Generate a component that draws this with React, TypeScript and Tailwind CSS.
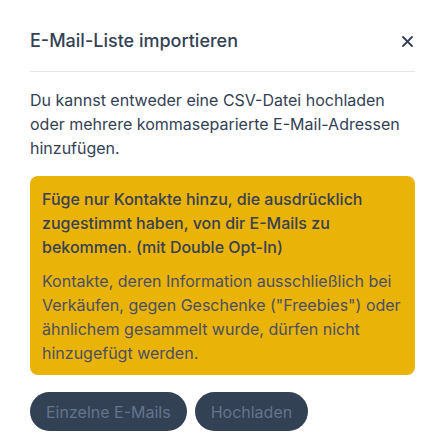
export default function App() {
  return (
    <div
      className="w-[445px] h-[446px] bg-white px-[30px] text-[#334155]"
      style={{ fontFamily: "Inter, 'Noto Sans', sans-serif" }}
    >
      <div className="flex items-center justify-between pt-[27px] pb-[16px] border-b border-[#e5e7eb]">
        <h2 className="text-[18px] leading-[28px] font-medium text-[#334155]">
          E-Mail-Liste importieren
        </h2>
        <button className="mr-[2px] text-[#334155]" aria-label="Schließen">
          <svg width="11" height="11" viewBox="0 0 11 11" fill="none">
            <path d="M1 1L10 10M10 1L1 10" stroke="currentColor" strokeWidth="1.8" strokeLinecap="round" />
          </svg>
        </button>
      </div>

      <p className="pt-[16px] text-[16px] leading-[24px] text-[#334155]">
        Du kannst entweder eine CSV-Datei hochladen oder mehrere kommaseparierte E-Mail-Adressen hinzufügen.
      </p>

      <div className="mt-[16px] rounded-lg bg-[#e9b308] px-3 pt-[11px] pb-[10px] flex flex-col gap-[10px]">
        <p className="text-[16px] leading-[24px] font-medium text-[#374151]">
          Füge nur Kontakte hinzu, die ausdrücklich zugestimmt haben, von dir E-Mails zu bekommen. (mit Double Opt-In)
        </p>
        <p className="text-[16px] leading-[24px] text-[#4b5060]">
          Kontakte, deren Information ausschließlich bei Verkäufen, gegen Geschenke ("Freebies") oder ähnlichem gesammelt wurde, dürfen nicht hinzugefügt werden.
        </p>
      </div>

      <div className="mt-[17px] flex gap-2">
        <button className="h-[39px] rounded-full bg-[#334155] px-4 text-[16px] text-[#64748b]">
          Einzelne E-Mails
        </button>
        <button className="h-[39px] rounded-full bg-[#334155] px-4 text-[16px] text-[#64748b]">
          Hochladen
        </button>
      </div>
    </div>
  );
}
